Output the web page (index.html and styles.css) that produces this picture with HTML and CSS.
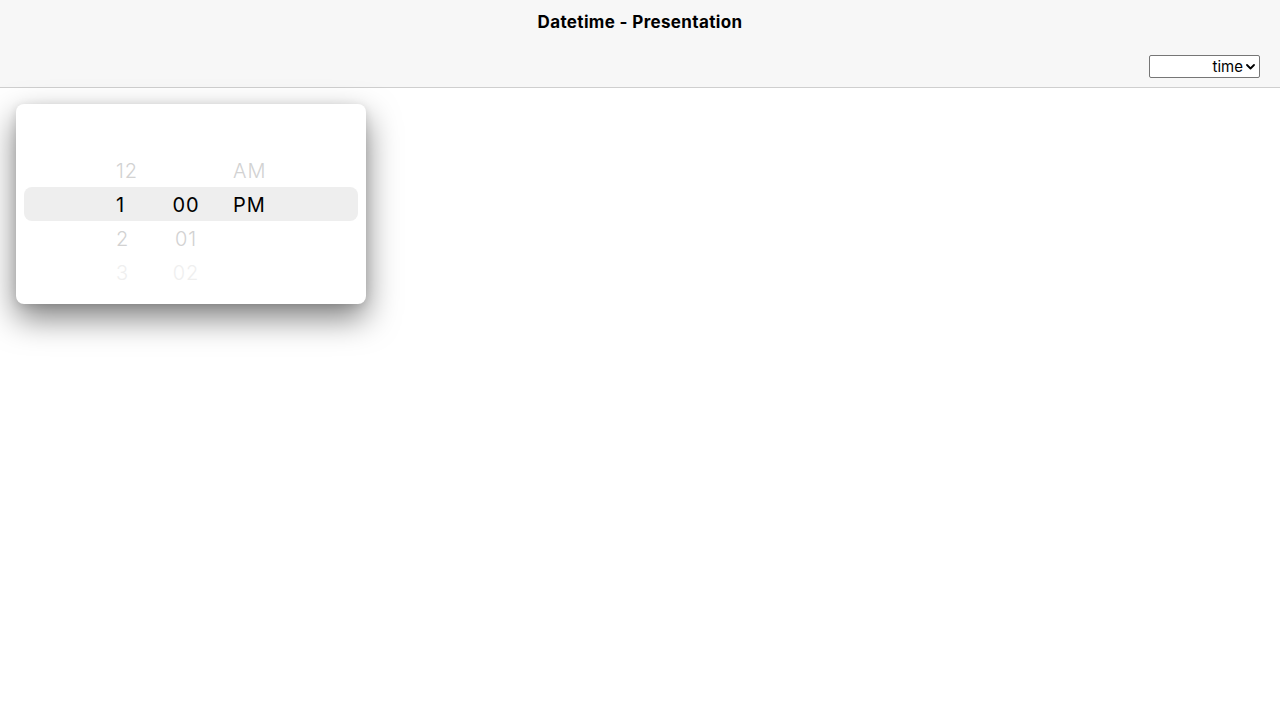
FILE: index.html
```html
<!DOCTYPE html>
<html>
<head>
<meta charset="utf-8">
<link rel="stylesheet" href="styles.css">
</head>
<body>
<header class="header">
  <div class="title-bar">
    <h1 class="title">Datetime - Presentation</h1>
  </div>
  <div class="tool-bar">
    <div class="select">
      <span class="select-text">time</span>
      <svg class="select-arrow" width="9" height="6" viewBox="0 0 9 6"><path d="M1 1 L4.5 4.5 L8 1" fill="none" stroke="#000" stroke-width="1.8" stroke-linecap="round" stroke-linejoin="round"/></svg>
    </div>
  </div>
</header>
<main class="content">
  <div class="card">
    <div class="highlight"></div>
    <div class="picker">
      <div class="col col-hour">
        <div class="item"></div>
        <div class="item far1">12</div>
        <div class="item active">1</div>
        <div class="item far1">2</div>
        <div class="item far2">3</div>
      </div>
      <div class="col col-min">
        <div class="item"></div>
        <div class="item"></div>
        <div class="item active">00</div>
        <div class="item far1">01</div>
        <div class="item far2">02</div>
      </div>
      <div class="col col-ampm">
        <div class="item"></div>
        <div class="item far1">AM</div>
        <div class="item active">PM</div>
        <div class="item"></div>
        <div class="item"></div>
      </div>
    </div>
  </div>
</main>
</body>
</html>
```

FILE: styles.css
```css
html, body {
  margin: 0;
  padding: 0;
  background: #ffffff;
  font-family: Inter, "Noto Sans", sans-serif;
}
body {
  min-height: 100vh;
}
.header {
  background: #f7f7f7;
  border-bottom: 1px solid #cfcfcf;
  height: 87px;
  display: flex;
  flex-direction: column;
}
.title-bar {
  height: 44px;
  display: flex;
  justify-content: center;
}
.title {
  margin: 0;
  padding-top: 11px;
  font-size: 17px;
  font-weight: 700;
  line-height: 22px;
  color: #000;
  letter-spacing: 0.35px;
}
.tool-bar {
  display: flex;
  justify-content: flex-end;
  padding: 11px 20px 0 0;
}
.select {
  width: 111px;
  height: 23px;
  box-sizing: border-box;
  border: 1px solid #767676;
  border-radius: 2px;
  background: #fff;
  display: flex;
  align-items: center;
  justify-content: flex-end;
  padding-right: 4px;
  gap: 3px;
  font-size: 15px;
  color: #000;
}
.select-text {
  line-height: 20px;
}
.content {
  padding: 16px;
}
.card {
  position: relative;
  width: 350px;
  height: 200px;
  background: #fff;
  border-radius: 8px;
  box-shadow: 0 14px 32px rgba(0, 0, 0, 0.5), 0 2px 10px rgba(0, 0, 0, 0.1);
  overflow: hidden;
}
.highlight {
  position: absolute;
  left: 8px;
  right: 8px;
  top: 83px;
  height: 34px;
  background: #eeeeee;
  border-radius: 8px;
}
.picker {
  position: relative;
  display: flex;
  padding-top: 16px;
  padding-left: 100px;
}
.col {
  display: flex;
  flex-direction: column;
}
.col-hour {
  width: 56px;
}
.col-min {
  width: 28px;
  align-items: center;
}
.col-ampm {
  margin-left: 33px;
}
.item {
  height: 34px;
  line-height: 34px;
  font-size: 20px;
  font-weight: 300;
  letter-spacing: 1px;
  color: #000;
  white-space: nowrap;
}
.item.active {
  font-weight: 400;
}
.item.far1 {
  color: #d2d2d2;
}
.item.far2 {
  color: #efefef;
}
```
